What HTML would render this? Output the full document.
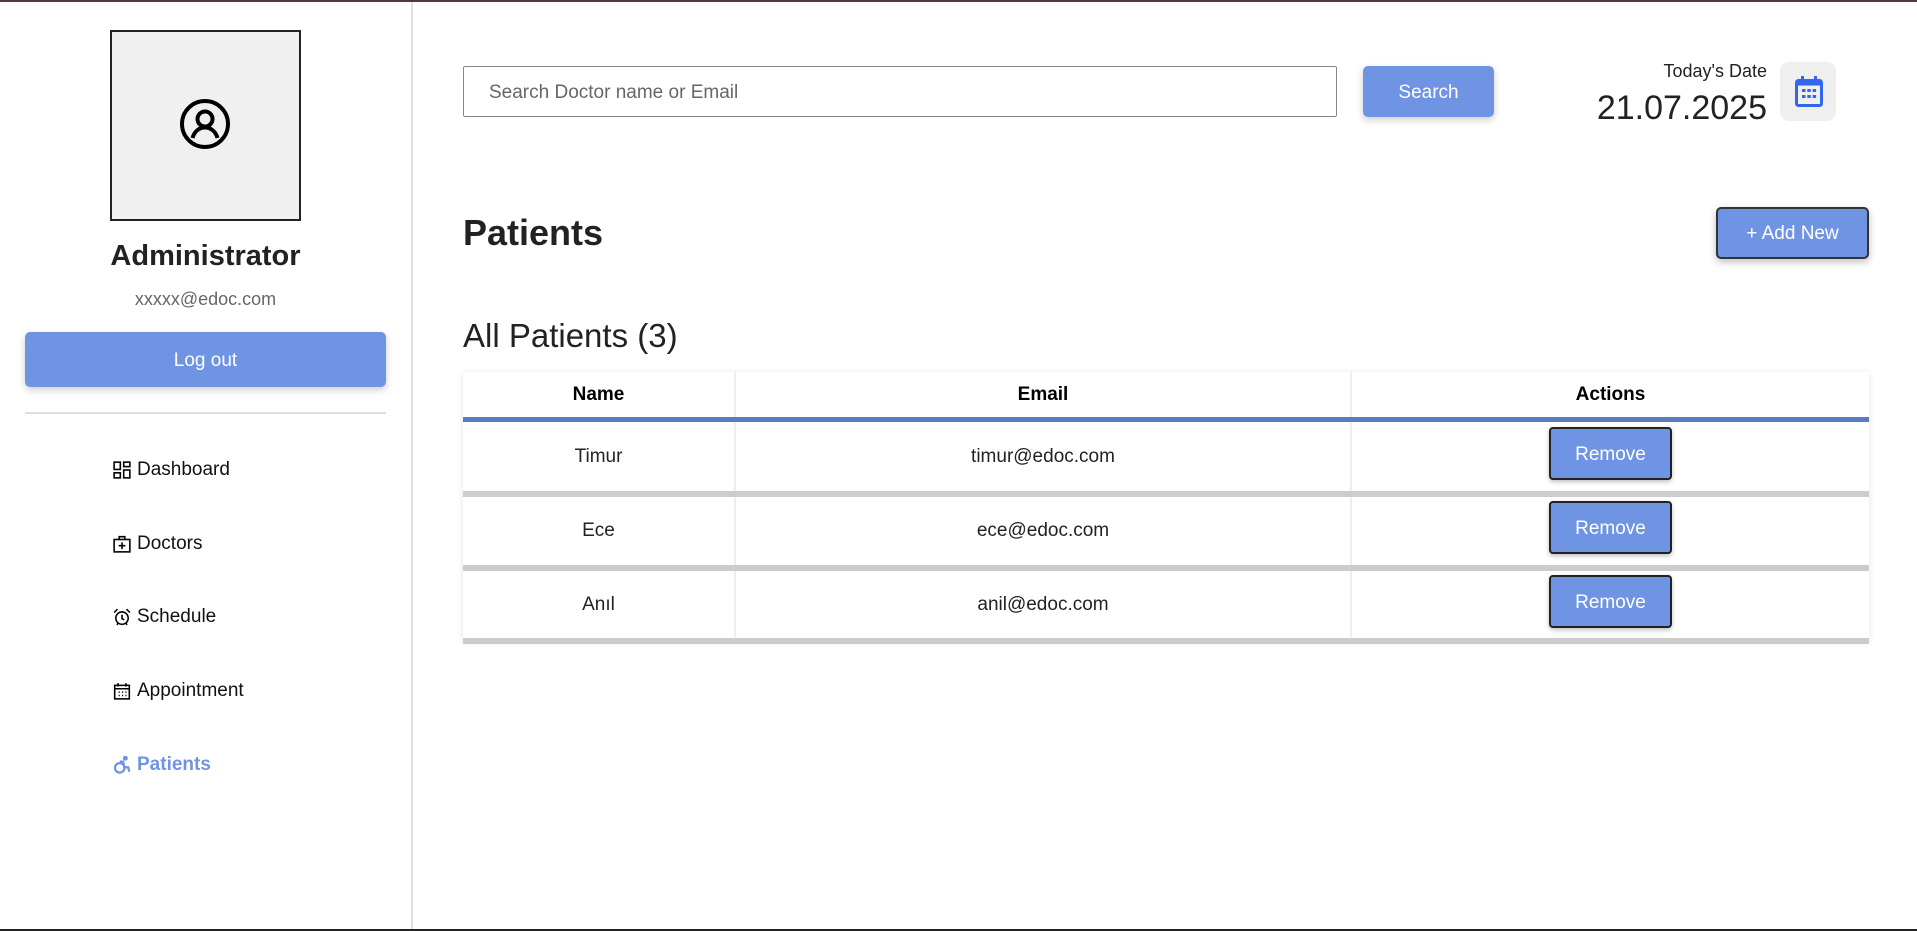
<!DOCTYPE html>
<html><head><meta charset="utf-8"><style>
*{box-sizing:border-box;margin:0;padding:0}
body{width:1917px;height:931px;position:relative;background:#fff;font-family:"Liberation Sans",Arial,sans-serif;color:#111;overflow:hidden}
.a{position:absolute}
.btn{background:#6f94e3;color:#fff;border-radius:5px;display:flex;align-items:center;justify-content:center;font-size:19px;padding-top:2px}
.nav{position:absolute;left:113px;font-size:19px;display:flex;align-items:center;gap:6px;height:24px}
.nav svg{width:18px;height:18px}
.cell{position:absolute;display:flex;align-items:center;justify-content:center;font-size:19px;color:#222}
.rem{position:absolute;left:1549px;width:123px;height:53px;border:2px solid #222;border-radius:4px;background:#6f94e3;color:#fff;font-size:19px;display:flex;align-items:center;justify-content:center;padding-top:2px;box-shadow:0 2px 5px rgba(0,0,0,.25)}
</style></head><body>
<div class="a" style="left:0;top:0;width:1917px;height:2px;background:#4a3a42"></div>
<div class="a" style="left:0;top:929px;width:1917px;height:2px;background:#222"></div>
<div class="a" style="left:411px;top:2px;width:2px;height:927px;background:#e0e0e0"></div>

<div class="a" style="left:110px;top:30px;width:191px;height:191px;background:#f0f0f0;border:2px solid #222"></div>
<svg class="a" style="left:179px;top:98px" width="52" height="52" viewBox="0 0 52 52" fill="none" stroke="#000" stroke-width="4"><circle cx="26" cy="26" r="23"/><circle cx="26" cy="21" r="7.5"/><path d="M13.5 40c2-7 7-10.5 12.5-10.5S36.5 33 38.5 40"/></svg>
<div class="a" style="left:0;width:411px;top:240px;text-align:center;font-size:29px;font-weight:bold;color:#222">Administrator</div>
<div class="a" style="left:0;width:411px;top:289px;text-align:center;font-size:18px;color:#666">xxxxx@edoc.com</div>
<div class="a btn" style="left:25px;top:332px;width:361px;height:55px;box-shadow:0 3px 8px rgba(0,0,0,.2)">Log out</div>
<div class="a" style="left:25px;top:412px;width:361px;height:2px;background:#ddd"></div>

<div class="nav" style="top:458px"><svg viewBox="0 0 16 16" fill="none" stroke="#000" stroke-width="1.4"><rect x="1" y="1" width="5.5" height="6.5"/><rect x="9.5" y="1" width="5.5" height="4"/><rect x="1" y="10.5" width="5.5" height="4.5"/><rect x="9.5" y="8" width="5.5" height="7"/></svg>Dashboard</div>
<div class="nav" style="top:532px"><svg viewBox="0 0 16 16" fill="none" stroke="#000" stroke-width="1.4"><rect x="1" y="4" width="14" height="11"/><path d="M5.5 4V1.5h5V4M8 6.5v6M5 9.5h6"/></svg>Doctors</div>
<div class="nav" style="top:605px"><svg viewBox="0 0 16 16" fill="none" stroke="#000" stroke-width="1.4"><circle cx="8" cy="9" r="5.5"/><path d="M8 6v3.5l2 1M1 4l3-3M15 4l-3-3M3.5 15l1-1.5M12.5 15l-1-1.5"/></svg>Schedule</div>
<div class="nav" style="top:679px"><svg viewBox="0 0 16 16" fill="none" stroke="#000" stroke-width="1.4"><rect x="1.5" y="3" width="13" height="12"/><path d="M1.5 6h13M4.5 1v3M11.5 1v3M5 9h1M8 9h1M11 9h1M5 12h1M8 12h1M11 12h1"/></svg>Appointment</div>
<div class="nav" style="top:753px;color:#6f94e3;font-weight:bold"><svg viewBox="0 0 16 16" fill="none" stroke="#6f94e3" stroke-width="2"><circle cx="11" cy="2" r="1.2" fill="#6f94e3"/><circle cx="6" cy="10.5" r="4.2"/><path d="M6 5l3 0 1 5h3.5l1 4"/></svg>Patients</div>

<div class="a" style="left:463px;top:66px;width:874px;height:51px;border:1px solid #888;border-radius:2px;font-size:19px;color:#666;padding-left:25px;line-height:52px">Search Doctor name or Email</div>
<div class="a btn" style="left:1363px;top:66px;width:131px;height:51px;box-shadow:0 3px 8px rgba(0,0,0,.2)">Search</div>
<div class="a" style="right:150px;top:61px;font-size:18px;color:#222">Today's Date</div>
<div class="a" style="right:150px;top:89px;font-size:34px;color:#222">21.07.2025</div>
<div class="a" style="left:1780px;top:62px;width:56px;height:59px;background:#efefef;border-radius:9px"></div>
<svg class="a" style="left:1795px;top:76px" width="28" height="32" viewBox="0 0 28 32"><rect x="6" y="0" width="3" height="6" fill="#3366ee"/><rect x="19" y="0" width="3" height="6" fill="#3366ee"/><rect x="1.5" y="4.5" width="25" height="25" rx="2" fill="none" stroke="#3366ee" stroke-width="3"/><rect x="1.5" y="4.5" width="25" height="5" fill="#3366ee"/><g fill="#3366ee"><rect x="7" y="13" width="3.5" height="3"/><rect x="12.3" y="13" width="3.5" height="3"/><rect x="17.6" y="13" width="3.5" height="3"/><rect x="7" y="19" width="3.5" height="3"/><rect x="12.3" y="19" width="3.5" height="3"/><rect x="17.6" y="19" width="3.5" height="3"/></g></svg>

<div class="a" style="left:463px;top:212px;font-size:36px;font-weight:bold;color:#222">Patients</div>
<div class="a btn" style="left:1716px;top:207px;width:153px;height:52px;border:2px solid #333;box-shadow:0 3px 8px rgba(0,0,0,.25)">+ Add New</div>
<div class="a" style="left:463px;top:317px;font-size:33px;color:#222">All Patients (3)</div>

<div class="a" style="left:463px;top:372px;width:1406px;height:269px;box-shadow:0 1px 6px rgba(0,0,0,.12)"></div>
<div class="a" style="left:734px;top:372px;width:2px;height:265px;background:#eee"></div>
<div class="a" style="left:1350px;top:372px;width:2px;height:265px;background:#eee"></div>
<div class="cell" style="left:463px;width:271px;top:372px;height:45px;font-weight:bold;color:#000">Name</div>
<div class="cell" style="left:736px;width:614px;top:372px;height:45px;font-weight:bold;color:#000">Email</div>
<div class="cell" style="left:1352px;width:517px;top:372px;height:45px;font-weight:bold;color:#000">Actions</div>
<div class="a" style="left:463px;top:417px;width:1406px;height:5px;background:#5b7bc0"></div>
<div class="a" style="left:463px;top:491px;width:1406px;height:6px;background:#ccc"></div>
<div class="a" style="left:463px;top:565px;width:1406px;height:6px;background:#ccc"></div>
<div class="a" style="left:463px;top:638px;width:1406px;height:6px;background:#ccc"></div>

<div class="cell" style="left:463px;width:271px;top:422px;height:69px">Timur</div>
<div class="cell" style="left:736px;width:614px;top:422px;height:69px">timur@edoc.com</div>
<div class="rem" style="top:427px">Remove</div>
<div class="cell" style="left:463px;width:271px;top:497px;height:68px">Ece</div>
<div class="cell" style="left:736px;width:614px;top:497px;height:68px">ece@edoc.com</div>
<div class="rem" style="top:501px">Remove</div>
<div class="cell" style="left:463px;width:271px;top:571px;height:67px">Anıl</div>
<div class="cell" style="left:736px;width:614px;top:571px;height:67px">anil@edoc.com</div>
<div class="rem" style="top:575px">Remove</div>
</body></html>
